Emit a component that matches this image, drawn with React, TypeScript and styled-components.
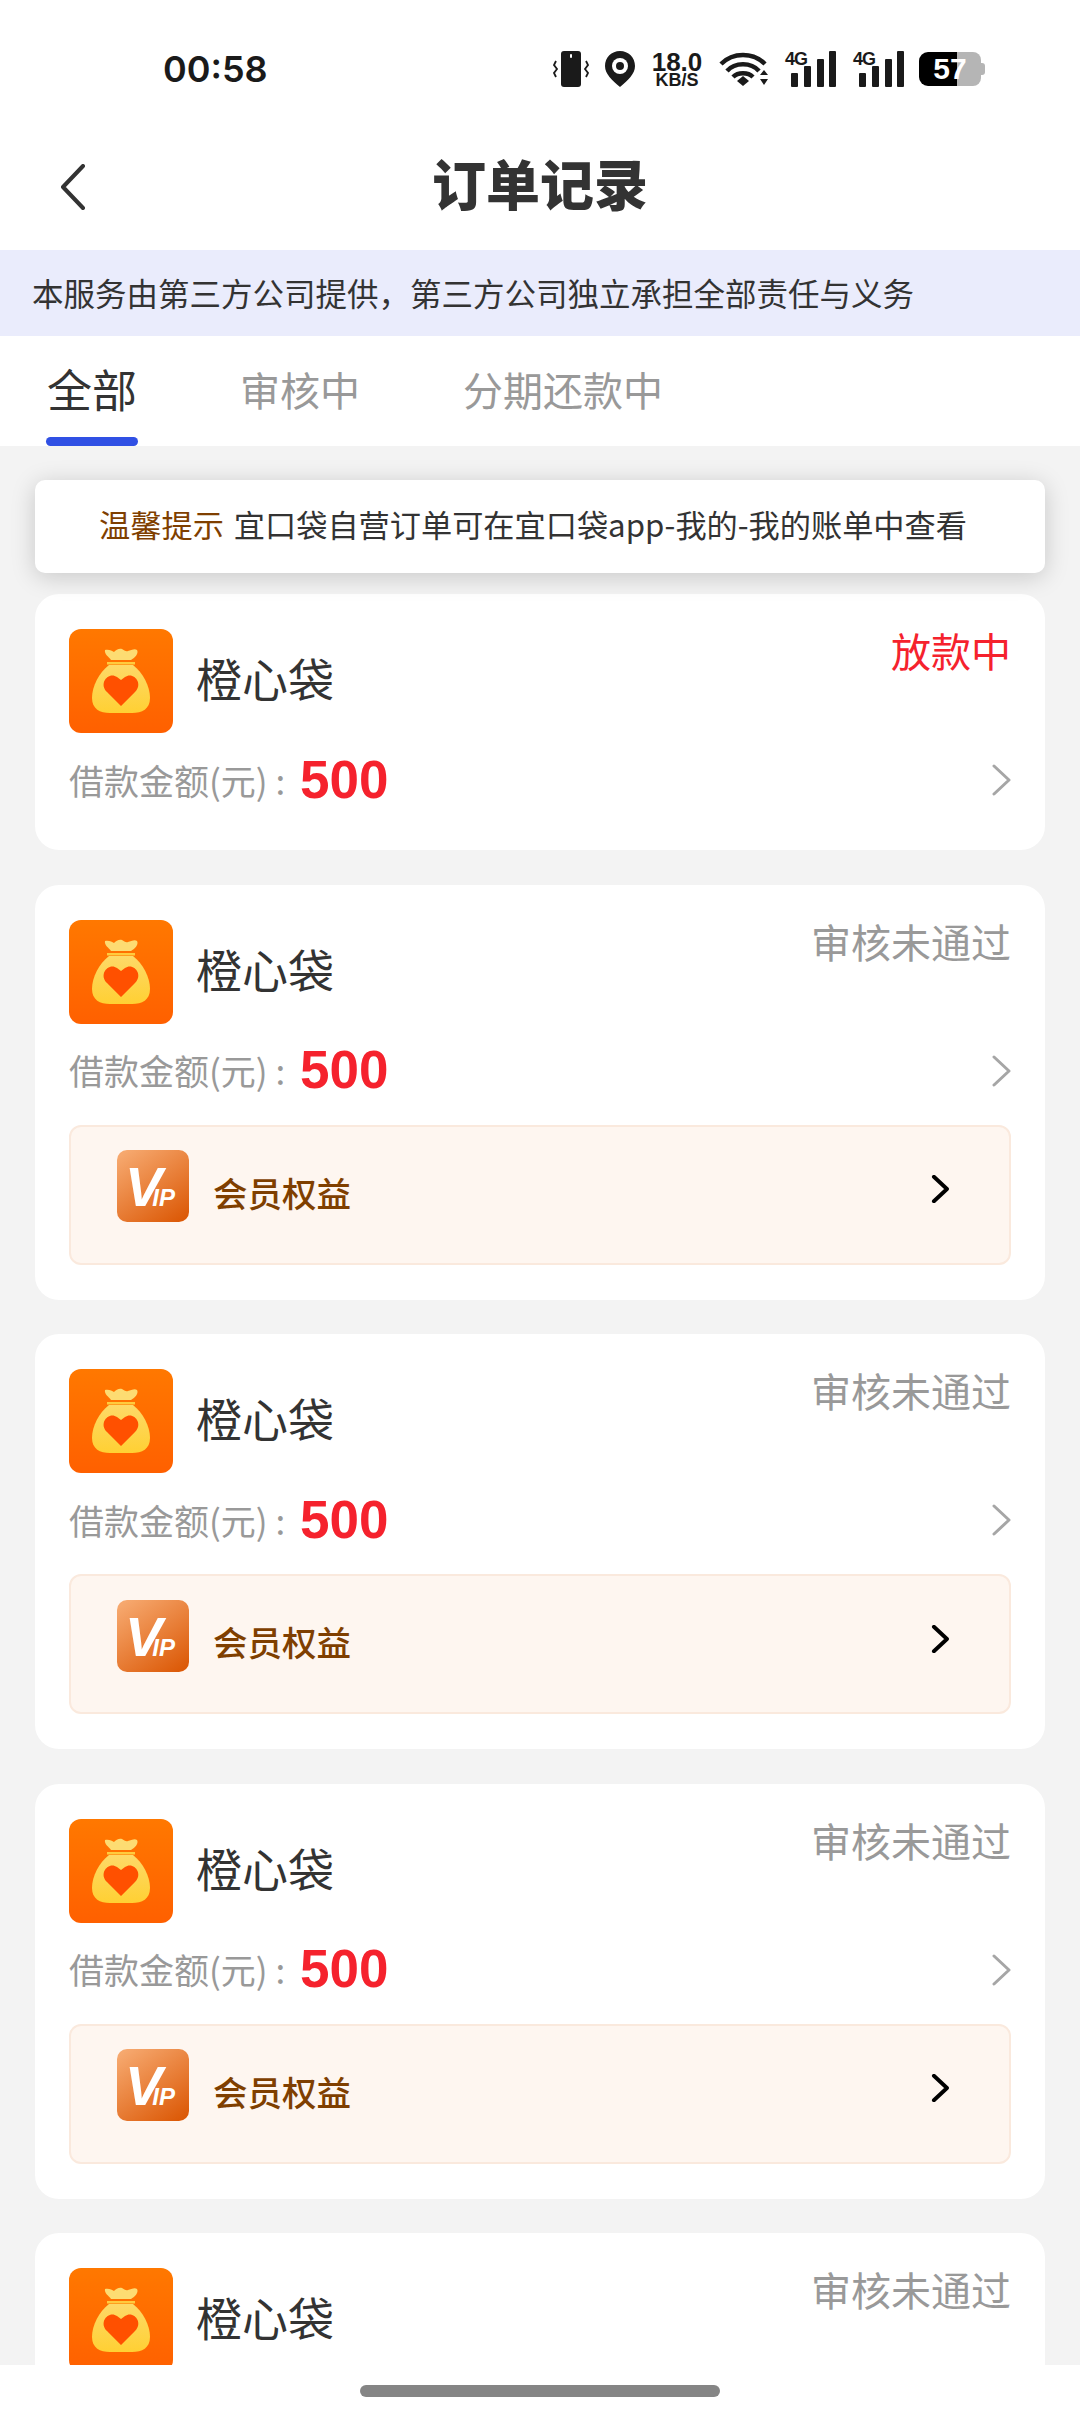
import React from 'react';
import styled, { createGlobalStyle } from 'styled-components';

const cjk = `'Noto Sans CJK SC', 'Noto Sans', sans-serif`;

const GlobalStyle = createGlobalStyle`
  html, body {
    margin: 0;
    padding: 0;
    background: #fff;
  }
  * {
    box-sizing: border-box;
  }
`;

type Order = {
  status: string;
  lending?: boolean;
  vip?: boolean;
};

const orders: Order[] = [
  { status: '放款中', lending: true },
  { status: '审核未通过', vip: true },
  { status: '审核未通过', vip: true },
  { status: '审核未通过', vip: true },
  { status: '审核未通过', vip: true },
];

const BagLogo = ({ id }: { id: string }) => (
  <LogoSvg viewBox="0 0 104 104">
    <defs>
      <linearGradient id={`${id}-bg`} x1="0" y1="0" x2="0" y2="1">
        <stop offset="0" stopColor="#ff7800" />
        <stop offset="1" stopColor="#ff6000" />
      </linearGradient>
      <linearGradient id={`${id}-bag`} x1="0" y1="0" x2="0" y2="1">
        <stop offset="0" stopColor="#fdd968" />
        <stop offset="1" stopColor="#ffd033" />
      </linearGradient>
    </defs>
    <rect width="104" height="104" rx="12" fill={`url(#${id}-bg)`} />
    <path
      d="M36 21c4-1 7 1 9 2 2-2 5-4 8-3 2 1 4 3 6 2 3-1 7-3 9-1 2 3-2 8-6 10H42c-2-3-7-6-6-10z"
      fill="#fddc72"
    />
    <rect x="38" y="33" width="28" height="2.5" fill="#ffcb3d" />
    <path
      d="M40 36h24c10 8 17 21 17 33 0 11-8 15-18 15H41c-10 0-18-4-18-15 0-12 7-25 17-33z"
      fill={`url(#${id}-bag)`}
    />
    <path
      d="M52 77L38 63c-9-9 2-21 10-15l4 3 4-3c8-6 19 6 10 15z"
      fill="#ff5000"
    />
  </LogoSvg>
);

const VipLogo = ({ id }: { id: string }) => (
  <VipSvg viewBox="0 0 72 72">
    <defs>
      <linearGradient id={`${id}-vip`} x1="0.15" y1="0" x2="0.85" y2="1">
        <stop offset="0" stopColor="#f6a86e" />
        <stop offset="1" stopColor="#dc5a08" />
      </linearGradient>
    </defs>
    <rect width="72" height="72" rx="10" fill={`url(#${id}-vip)`} />
    <VipMark x="8" y="56">
      V
      <VipSmall dx="-10">IP</VipSmall>
    </VipMark>
  </VipSvg>
);

const Chevron = ({ color, width }: { color: string; width: number }) => (
  <svg width="100%" height="100%" viewBox="0 0 20 32" fill="none">
    <path
      d="M3 2l15 14L3 30"
      stroke={color}
      strokeWidth={width}
      strokeLinecap="round"
      strokeLinejoin="round"
    />
  </svg>
);

const Signal = () => (
  <SignalBox>
    <FourG>4G</FourG>
    <svg width="46" height="36" viewBox="0 0 46 36" fill="#1a1a1a">
      <rect x="0" y="22" width="7" height="14" rx="1" />
      <rect x="13" y="15" width="7" height="21" rx="1" />
      <rect x="26" y="8" width="7" height="28" rx="1" />
      <rect x="38" y="0" width="7" height="36" rx="1" />
    </svg>
  </SignalBox>
);

const StatusIcons = () => (
  <StatusRight>
    <svg width="36" height="36" viewBox="0 0 36 36">
      <rect x="8" y="0" width="20" height="36" rx="3" fill="#1a1a1a" />
      <rect x="17" y="3" width="2" height="4" rx="1" fill="#fff" />
      <path
        d="M3 10l-2 4 3 4-3 4 2 4M33 10l2 4-3 4 3 4-2 4"
        fill="none"
        stroke="#1a1a1a"
        strokeWidth="1.8"
      />
    </svg>
    <svg width="30" height="36" viewBox="0 0 30 36">
      <path
        d="M15 0C6.500 0 0 6.500 0 15c0 8 7 14 15 21 8-7 15-13 15-21C30 6.500 23.500 0 15 0z"
        fill="#1a1a1a"
      />
      <circle cx="15" cy="15" r="8" fill="#fff" />
      <circle cx="15" cy="15" r="4" fill="#1a1a1a" />
    </svg>
    <Speed>
      <SpeedValue>18.0</SpeedValue>
      <SpeedUnit>KB/S</SpeedUnit>
    </Speed>
    <svg width="50" height="36" viewBox="0 0 50 36" fill="none">
      <path d="M2 13C14 1 34 1 46 13" stroke="#1a1a1a" strokeWidth="4.500" />
      <path d="M8 20C16 11 32 11 40 20" stroke="#1a1a1a" strokeWidth="4.500" />
      <path d="M14 26c5-5 15-5 20 0" stroke="#1a1a1a" strokeWidth="4.500" />
      <path d="M18 30l6-5 6 5-6 5z" fill="#1a1a1a" />
      <path d="M41 24l4-5 4 5zM41 28h8l-4 6z" fill="#1a1a1a" />
    </svg>
    <Signal />
    <Signal />
    <Battery>
      <BatteryLevel>57</BatteryLevel>
    </Battery>
  </StatusRight>
);

const OrderCard = ({ order, index }: { order: Order; index: number }) => (
  <Card>
    <CardTop>
      <Brand>
        <BagLogo id={`bag-${index}`} />
        <BrandName>橙心袋</BrandName>
      </Brand>
      <Status $lending={order.lending}>{order.status}</Status>
    </CardTop>
    <AmountRow>
      <AmountLabel>借款金额(元) :</AmountLabel>
      <AmountValue>500</AmountValue>
      <AmountArrow>
        <Chevron color="#a6a6a6" width={3} />
      </AmountArrow>
    </AmountRow>
    {order.vip && (
      <VipBox>
        <VipLogo id={`vip-${index}`} />
        <VipText>会员权益</VipText>
        <VipArrow>
          <Chevron color="#000" width={4.4} />
        </VipArrow>
      </VipBox>
    )}
  </Card>
);

export default function App() {
  return (
    <Page>
      <GlobalStyle />
      <StatusBar>
        <Time>00:58</Time>
        <StatusIcons />
      </StatusBar>
      <NavBar>
        <BackButton>
          <svg width="26" height="46" viewBox="0 0 26 46" fill="none">
            <path
              d="M23 2L3 23l20 21"
              stroke="#333"
              strokeWidth="4"
              strokeLinecap="round"
              strokeLinejoin="round"
            />
          </svg>
        </BackButton>
        <Title>订单记录</Title>
      </NavBar>
      <Notice>本服务由第三方公司提供，第三方公司独立承担全部责任与义务</Notice>
      <Tabs>
        <Tab $active>全部</Tab>
        <Tab>审核中</Tab>
        <Tab>分期还款中</Tab>
      </Tabs>
      <Content>
        <Tip>
          <TipLabel>温馨提示</TipLabel>
          <TipText>宜口袋自营订单可在宜口袋app-我的-我的账单中查看</TipText>
        </Tip>
        <CardList>
          {orders.map((order, i) => (
            <OrderCard key={i} order={order} index={i} />
          ))}
        </CardList>
      </Content>
      <BottomBar>
        <HomeIndicator />
      </BottomBar>
    </Page>
  );
}

const Page = styled.div`
  width: 1080px;
  height: 2412px;
  display: flex;
  flex-direction: column;
  overflow: hidden;
  background: #fff;
  font-family: ${cjk};
`;

const StatusBar = styled.div`
  height: 130px;
  flex-shrink: 0;
  display: flex;
  align-items: flex-start;
  justify-content: space-between;
  padding: 51px 95px 0 163px;
`;

const Time = styled.div`
  font-family: Inter, sans-serif;
  font-size: 36px;
  font-weight: 600;
  line-height: 36px;
  color: #1a1a1a;
`;

const StatusRight = styled.div`
  display: flex;
  align-items: center;
  height: 36px;
  gap: 16px;
`;

const Speed = styled.div`
  width: 52px;
  display: flex;
  flex-direction: column;
  align-items: center;
  font-family: 'Liberation Sans', sans-serif;
  font-weight: 700;
  color: #1a1a1a;
`;

const SpeedValue = styled.span`
  font-size: 26px;
  line-height: 22px;
`;

const SpeedUnit = styled.span`
  font-size: 18px;
  line-height: 14px;
`;

const SignalBox = styled.div`
  position: relative;
  width: 52px;
  height: 36px;
  display: flex;
  justify-content: flex-end;
`;

const FourG = styled.span`
  position: absolute;
  left: 0;
  top: -1px;
  font-family: 'Liberation Sans', sans-serif;
  font-size: 18px;
  line-height: 18px;
  font-weight: 700;
  letter-spacing: -1px;
  color: #1a1a1a;
`;

const Battery = styled.div`
  position: relative;
  width: 62px;
  height: 34px;
  margin: 0 4px 0 -2px;
  border-radius: 9px 8px 8px 9px;
  background: linear-gradient(90deg, #000 0, #000 38px, #b5b5b5 38px, #b5b5b5 100%);
  display: flex;
  align-items: center;
  justify-content: center;

  &::after {
    content: '';
    position: absolute;
    right: -4px;
    top: 11px;
    width: 4px;
    height: 12px;
    border-radius: 0 3px 3px 0;
    background: #b5b5b5;
  }
`;

const BatteryLevel = styled.span`
  font-family: 'Liberation Sans', sans-serif;
  font-size: 30px;
  font-weight: 700;
  line-height: 34px;
  color: #fff;
`;

const NavBar = styled.div`
  position: relative;
  height: 120px;
  flex-shrink: 0;
  display: flex;
  align-items: center;
  justify-content: center;
`;

const BackButton = styled.div`
  position: absolute;
  left: 60px;
  top: 34px;
  width: 26px;
  height: 46px;
  display: flex;
`;

const Title = styled.h1`
  margin: 0 0 14px;
  font-size: 54px;
  line-height: 72px;
  font-weight: 900;
  color: #333;
`;

const Notice = styled.div`
  height: 86px;
  flex-shrink: 0;
  padding: 0 0 3px 32px;
  display: flex;
  align-items: center;
  background: #eaecfc;
  font-size: 31.500px;
  color: #333;
  white-space: nowrap;
`;

const Tabs = styled.div`
  height: 110px;
  flex-shrink: 0;
  display: flex;
  align-items: flex-start;
  gap: 103px;
  padding-left: 47px;
  background: #fff;
`;

const Tab = styled.div<{ $active?: boolean }>`
  position: relative;
  height: 110px;
  font-size: ${({ $active }) => ($active ? '45px' : '40px')};
  line-height: 110px;
  margin-top: -2px;
  color: ${({ $active }) => ($active ? '#333' : '#999')};

  ${({ $active }) =>
    $active &&
    `
    &::after {
      content: '';
      position: absolute;
      left: -1px;
      right: -1px;
      bottom: -2px;
      height: 9px;
      border-radius: 5px;
      background: #3050e4;
    }
  `}
`;

const Content = styled.div`
  flex: 1;
  min-height: 0;
  overflow: hidden;
  background: #f3f3f3;
  padding: 34px 35px 0;
`;

const Tip = styled.div`
  height: 93px;
  display: flex;
  align-items: center;
  justify-content: center;
  gap: 10px;
  padding: 0 14px 6px 0;
  background: #fff;
  border-radius: 10px;
  box-shadow: 0 4px 24px rgba(0, 0, 0, 0.18);
  position: relative;
  z-index: 1;
  white-space: nowrap;
`;

const TipLabel = styled.span`
  font-size: 31.200px;
  color: #7f3f00;
`;

const TipText = styled.span`
  font-size: 31.200px;
  color: #333;
`;

const CardList = styled.div`
  margin-top: 21px;
  display: flex;
  flex-direction: column;
  gap: 34.500px;
`;

const Card = styled.div`
  flex-shrink: 0;
  background: #fff;
  border-radius: 24px;
  padding: 35px 34px;
`;

const CardTop = styled.div`
  display: flex;
  justify-content: space-between;
  align-items: flex-start;
`;

const Brand = styled.div`
  display: flex;
  align-items: center;
  gap: 23px;
`;

const LogoSvg = styled.svg`
  width: 104px;
  height: 104px;
  display: block;
  flex-shrink: 0;
`;

const BrandName = styled.span`
  font-size: 46px;
  line-height: 64px;
  margin-bottom: 8px;
  color: #333;
`;

const Status = styled.span<{ $lending?: boolean }>`
  font-size: 40px;
  line-height: 42px;
  color: ${({ $lending }) => ($lending ? '#f5222d' : '#999')};
`;

const AmountRow = styled.div`
  height: 62px;
  margin-top: 16px;
  margin-bottom: 4px;
  display: flex;
  align-items: center;
`;

const AmountLabel = styled.span`
  font-size: 35px;
  margin-bottom: 2px;
  color: #999;
  width: 231px;
  white-space: nowrap;
`;

const AmountValue = styled.span`
  font-family: 'Liberation Sans', sans-serif;
  font-size: 53px;
  font-weight: 700;
  margin-bottom: 2px;
  color: #f5222d;
`;

const AmountArrow = styled.div`
  width: 20px;
  height: 32px;
  margin-left: auto;
`;

const VipBox = styled.div`
  height: 140px;
  margin-top: 23px;
  display: flex;
  align-items: center;
  padding: 0 60px 0 46px;
  background: #fef6f0;
  border: 2px solid #fae9dd;
  border-radius: 12px;
`;

const VipSvg = styled.svg`
  width: 72px;
  height: 72px;
  display: block;
  flex-shrink: 0;
  margin-top: -17px;
`;

const VipMark = styled.text`
  font-family: 'Liberation Sans', sans-serif;
  font-size: 56px;
  font-weight: 700;
  font-style: italic;
  fill: #fff;
`;

const VipSmall = styled.tspan`
  font-size: 24px;
`;

const VipText = styled.span`
  margin: 0 0 6px 24px;
  font-size: 34.500px;
  font-weight: 500;
  color: #7f3f00;
`;

const VipArrow = styled.div`
  width: 18px;
  height: 28px;
  margin-left: auto;
  margin-top: -11px;
`;

const BottomBar = styled.div`
  height: 47px;
  flex-shrink: 0;
  display: flex;
  justify-content: center;
  align-items: flex-start;
  padding-top: 20px;
  background: #fff;
`;

const HomeIndicator = styled.div`
  width: 360px;
  height: 12px;
  border-radius: 6px;
  background: #858585;
`;
